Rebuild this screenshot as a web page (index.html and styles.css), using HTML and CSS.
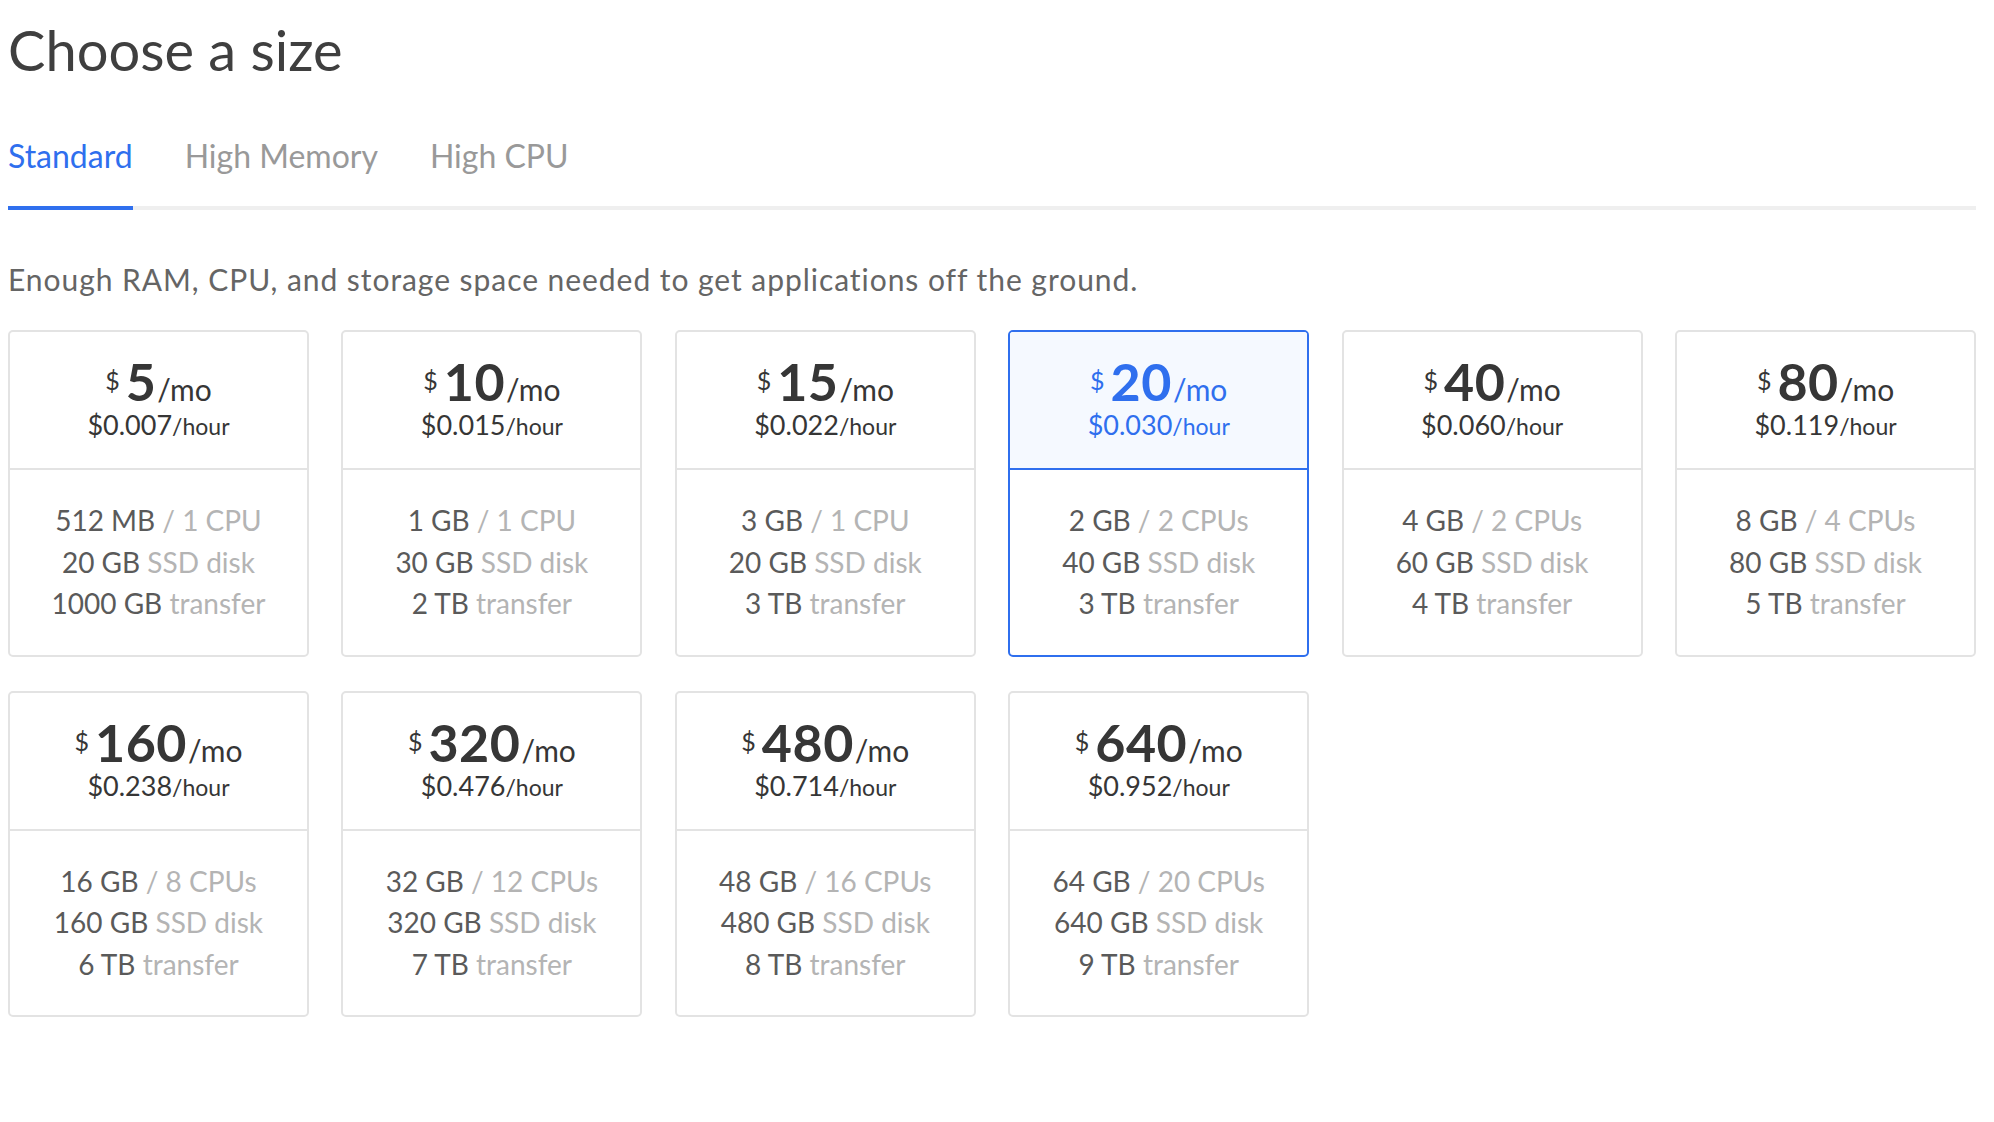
FILE: index.html
```html
<!DOCTYPE html>
<html lang="en">
<head>
<meta charset="utf-8">
<title>Choose a size</title>
<link rel="stylesheet" href="styles.css">
</head>
<body>
<div class="page">
  <h1 class="title">Choose a size</h1>
  <nav class="tabs">
    <span class="tab active">Standard</span>
    <span class="tab">High Memory</span>
    <span class="tab">High CPU</span>
  </nav>
  <p class="desc">Enough RAM, CPU, and storage space needed to get applications off the ground.</p>
  <div class="grid">
    <div class="card">
      <div class="head"><div class="price"><span class="cur">$</span><span class="amt">5</span>/mo</div><div class="hour">$0.007<span class="unit">/hour</span></div></div>
      <div class="specs"><div>512 MB <span class="lt">/ 1 CPU</span></div><div>20 GB <span class="lt">SSD disk</span></div><div>1000 GB <span class="lt">transfer</span></div></div>
    </div>
    <div class="card">
      <div class="head"><div class="price"><span class="cur">$</span><span class="amt">10</span>/mo</div><div class="hour">$0.015<span class="unit">/hour</span></div></div>
      <div class="specs"><div>1 GB <span class="lt">/ 1 CPU</span></div><div>30 GB <span class="lt">SSD disk</span></div><div>2 TB <span class="lt">transfer</span></div></div>
    </div>
    <div class="card">
      <div class="head"><div class="price"><span class="cur">$</span><span class="amt">15</span>/mo</div><div class="hour">$0.022<span class="unit">/hour</span></div></div>
      <div class="specs"><div>3 GB <span class="lt">/ 1 CPU</span></div><div>20 GB <span class="lt">SSD disk</span></div><div>3 TB <span class="lt">transfer</span></div></div>
    </div>
    <div class="card selected">
      <div class="head"><div class="price"><span class="cur">$</span><span class="amt">20</span>/mo</div><div class="hour">$0.030<span class="unit">/hour</span></div></div>
      <div class="specs"><div>2 GB <span class="lt">/ 2 CPUs</span></div><div>40 GB <span class="lt">SSD disk</span></div><div>3 TB <span class="lt">transfer</span></div></div>
    </div>
    <div class="card">
      <div class="head"><div class="price"><span class="cur">$</span><span class="amt">40</span>/mo</div><div class="hour">$0.060<span class="unit">/hour</span></div></div>
      <div class="specs"><div>4 GB <span class="lt">/ 2 CPUs</span></div><div>60 GB <span class="lt">SSD disk</span></div><div>4 TB <span class="lt">transfer</span></div></div>
    </div>
    <div class="card">
      <div class="head"><div class="price"><span class="cur">$</span><span class="amt">80</span>/mo</div><div class="hour">$0.119<span class="unit">/hour</span></div></div>
      <div class="specs"><div>8 GB <span class="lt">/ 4 CPUs</span></div><div>80 GB <span class="lt">SSD disk</span></div><div>5 TB <span class="lt">transfer</span></div></div>
    </div>
    <div class="card">
      <div class="head"><div class="price"><span class="cur">$</span><span class="amt">160</span>/mo</div><div class="hour">$0.238<span class="unit">/hour</span></div></div>
      <div class="specs"><div>16 GB <span class="lt">/ 8 CPUs</span></div><div>160 GB <span class="lt">SSD disk</span></div><div>6 TB <span class="lt">transfer</span></div></div>
    </div>
    <div class="card">
      <div class="head"><div class="price"><span class="cur">$</span><span class="amt">320</span>/mo</div><div class="hour">$0.476<span class="unit">/hour</span></div></div>
      <div class="specs"><div>32 GB <span class="lt">/ 12 CPUs</span></div><div>320 GB <span class="lt">SSD disk</span></div><div>7 TB <span class="lt">transfer</span></div></div>
    </div>
    <div class="card">
      <div class="head"><div class="price"><span class="cur">$</span><span class="amt">480</span>/mo</div><div class="hour">$0.714<span class="unit">/hour</span></div></div>
      <div class="specs"><div>48 GB <span class="lt">/ 16 CPUs</span></div><div>480 GB <span class="lt">SSD disk</span></div><div>8 TB <span class="lt">transfer</span></div></div>
    </div>
    <div class="card">
      <div class="head"><div class="price"><span class="cur">$</span><span class="amt">640</span>/mo</div><div class="hour">$0.952<span class="unit">/hour</span></div></div>
      <div class="specs"><div>64 GB <span class="lt">/ 20 CPUs</span></div><div>640 GB <span class="lt">SSD disk</span></div><div>9 TB <span class="lt">transfer</span></div></div>
    </div>
  </div>
</div>
</body>
</html>
```
FILE: styles.css
```css
html, body {
  background: #ffffff;
}
body {
  margin: 8px;
  font-family: Lato, "Open Sans", sans-serif;
  color: #444444;
}
.page {
  width: 1968px;
}
.title {
  margin: 10px 0 0 0;
  font-size: 56px;
  line-height: 64px;
  font-weight: 400;
  color: #3f3f3f;
}
.tabs {
  display: flex;
  gap: 52px;
  margin-top: 54px;
  border-bottom: 4px solid #efefef;
}
.tab {
  font-size: 32px;
  line-height: 40px;
  color: #999999;
  padding-bottom: 30px;
  margin-bottom: -4px;
  border-bottom: 4px solid transparent;
}
.tab.active {
  color: #2f6fee;
  border-bottom-color: #2f6fee;
}
.desc {
  margin: 49px 0 0 0;
  font-size: 30px;
  line-height: 40px;
  letter-spacing: 0.95px;
  color: #656565;
}
.grid {
  margin-top: 31px;
  display: grid;
  grid-template-columns: repeat(6, 1fr);
  column-gap: 32.5px;
  row-gap: 34px;
}
.card {
  border: 2px solid #e3e3e3;
  border-radius: 5px;
  text-align: center;
  overflow: hidden;
}
.head {
  padding: 23px 0 30px;
  border-bottom: 2px solid #e3e3e3;
  color: #363636;
}
.price {
  font-size: 30px;
  line-height: 1;
}
.cur {
  font-size: 25px;
  vertical-align: 11px;
  margin-right: 6px;
}
.amt {
  font-size: 52px;
  font-weight: 700;
  letter-spacing: 0.5px;
  margin-right: 1px;
}
.hour {
  margin-top: 4px;
  font-size: 27px;
  line-height: 1;
}
.unit {
  font-size: 23px;
}
.specs {
  padding: 30px 0;
  font-size: 28px;
  line-height: 41.5px;
  color: #5a5a5a;
}
.lt {
  color: #b4b4b4;
}
.card.selected {
  border-color: #2f6fee;
}
.card.selected .head {
  background: #f5f9ff;
  border-bottom-color: #2f6fee;
  color: #2f6fee;
}
```
